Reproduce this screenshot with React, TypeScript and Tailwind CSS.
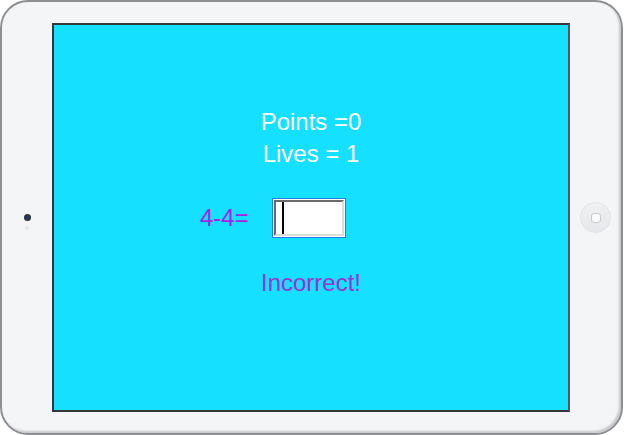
import React from 'react'

const font = { fontFamily: '"Liberation Sans", Arial, sans-serif' }

function Camera() {
  return (
    <div className="flex flex-col items-center gap-[5px] pt-[8px]">
      <div className="w-[7px] h-[7px] rounded-full bg-[#2f3338] flex items-center justify-center">
        <div className="w-[3px] h-[3px] rounded-full bg-[#1d3f7a]" />
      </div>
      <div className="w-[4px] h-[4px] rounded-full bg-[#e4e6ea]" />
    </div>
  )
}

function HomeButton() {
  return (
    <div className="w-[31px] h-[31px] rounded-full bg-gradient-to-b from-[#f0f1f3] to-[#e6e7ea] border border-[#e2e3e6] flex items-center justify-center">
      <div className="w-[10px] h-[10px] rounded-[3px] border border-[#c9cbd0] bg-[#fafafa]" />
    </div>
  )
}

export default function App() {
  return (
    <div className="w-[624px] h-[435px] bg-white" style={font}>
      <div className="w-[623px] h-[435px] rounded-[28px] bg-[#f4f5f7] border-2 border-[#8e8f92] shadow-[inset_-2px_-2px_2px_#c8c9cc] flex items-center">
        <div className="w-[50px] flex justify-center">
          <Camera />
        </div>

        <div className="w-[518px] h-[389px] bg-[#16e0ff] border-2 border-[#34373b] border-r-[#54575b] flex flex-col text-[24px] leading-[32px]">
          <div className="mt-[81px] text-center text-white">
            <div>Points =0</div>
            <div>Lives = 1</div>
          </div>

          <div className="mt-[28px] pl-[146px] flex items-center gap-[23px]">
            <span className="text-[#a520f0]">4-4=</span>
            <div className="w-[74px] h-[40px] border border-[#1e7fe0] bg-white p-px">
              <div className="w-full h-full border-2 border-t-[#6b6b6b] border-l-[#6b6b6b] border-r-[#dcdcdc] border-b-[#dcdcdc] bg-white flex items-center pl-[6px]">
                <div className="w-[2px] h-[32px] bg-black" />
              </div>
            </div>
          </div>

          <div className="mt-[29px] text-center text-[#9b32d4]">Incorrect!</div>
        </div>

        <div className="w-[51px] flex justify-center">
          <HomeButton />
        </div>
      </div>
    </div>
  )
}
